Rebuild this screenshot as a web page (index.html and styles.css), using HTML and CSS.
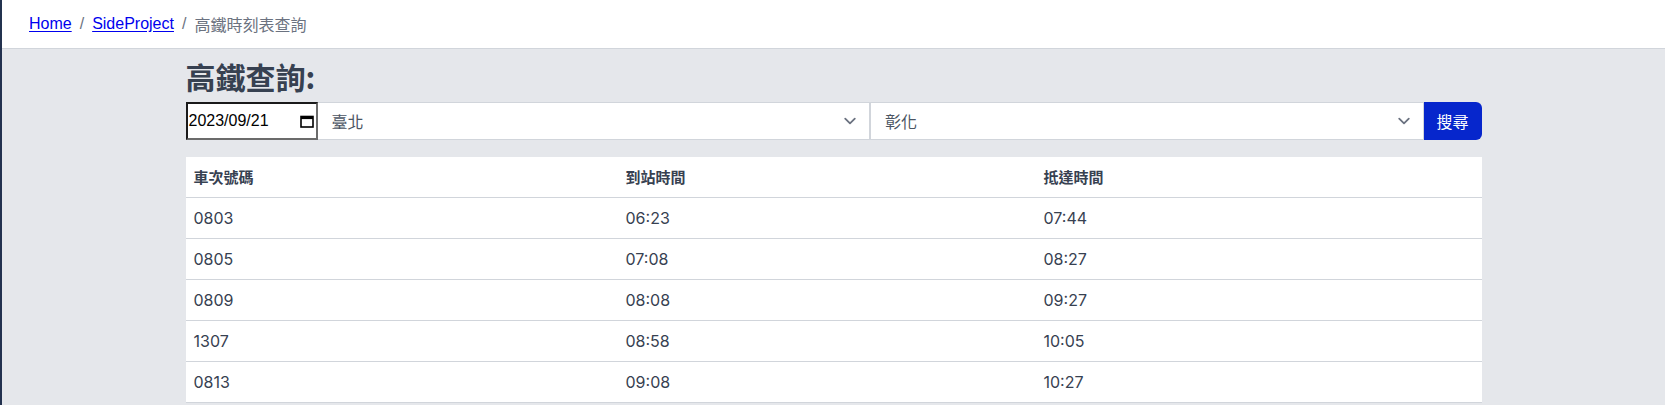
FILE: index.html
```html
<!DOCTYPE html>
<html lang="zh-Hant">
<head>
<meta charset="utf-8">
<title>高鐵時刻表查詢</title>
<link rel="stylesheet" href="styles.css">
</head>
<body>
<header class="topbar">
  <nav class="crumbs">
    <a href="#" class="crumb-link">Home</a>
    <span class="sep">/</span>
    <a href="#" class="crumb-link">SideProject</a>
    <span class="sep">/</span>
    <span class="crumb-current">高鐵時刻表查詢</span>
  </nav>
</header>
<main class="container">
  <h1 class="title">高鐵查詢:</h1>
  <form class="search">
    <div class="date-field">
      <span class="date-text">2023/09/21</span>
      <svg class="cal" width="14" height="13" viewBox="0 0 14 13" aria-hidden="true">
        <rect x="1" y="1.5" width="12" height="10.5" fill="none" stroke="#000" stroke-width="1.6"/>
        <rect x="1" y="1.5" width="12" height="2.6" fill="#000"/>
      </svg>
    </div>
    <div class="select">
      <span class="select-text">臺北</span>
      <svg class="chev" width="24" height="24" viewBox="0 0 20 20" aria-hidden="true"><path d="M6 8l4 4 4-4" fill="none" stroke="#6b7280" stroke-width="1.5" stroke-linecap="round" stroke-linejoin="round"/></svg>
    </div>
    <div class="select">
      <span class="select-text">彰化</span>
      <svg class="chev" width="24" height="24" viewBox="0 0 20 20" aria-hidden="true"><path d="M6 8l4 4 4-4" fill="none" stroke="#6b7280" stroke-width="1.5" stroke-linecap="round" stroke-linejoin="round"/></svg>
    </div>
    <button type="button" class="btn">搜尋</button>
  </form>
  <table class="timetable">
    <colgroup>
      <col class="c1"><col class="c2"><col class="c3">
    </colgroup>
    <thead>
      <tr><th>車次號碼</th><th>到站時間</th><th>抵達時間</th></tr>
    </thead>
    <tbody>
      <tr><td>0803</td><td>06:23</td><td>07:44</td></tr>
      <tr><td>0805</td><td>07:08</td><td>08:27</td></tr>
      <tr><td>0809</td><td>08:08</td><td>09:27</td></tr>
      <tr><td>1307</td><td>08:58</td><td>10:05</td></tr>
      <tr><td>0813</td><td>09:08</td><td>10:27</td></tr>
    </tbody>
  </table>
</main>
</body>
</html>
```

FILE: styles.css
```css
* { box-sizing: border-box; }

html, body { margin: 0; padding: 0; }

body {
  background: #e5e7eb;
  border-left: 2px solid #23324f;
  min-height: 100vh;
  font-family: Inter, "Noto Sans CJK TC", sans-serif;
  color: #374151;
}

.topbar {
  background: #ffffff;
  border-bottom: 1px solid #d1d5db;
  padding: 12px 27px;
  height: 49px;
}

.crumbs {
  font-family: "Liberation Sans", "Noto Sans CJK TC", sans-serif;
  font-size: 16px;
  line-height: 24px;
  display: flex;
  align-items: center;
}

.crumb-link {
  color: #0000ee;
  text-decoration: underline;
  text-underline-offset: 2px;
}

.sep {
  color: #6b7280;
  margin: 0 8px;
}

.crumb-current {
  color: #6b7280;
  font-family: "Noto Sans CJK TC", sans-serif;
}

.container {
  width: 1296px;
  margin: 0 auto;
  padding-top: 9px;
}

.title {
  margin: 0 0 8px 0;
  font-size: 30px;
  line-height: 36px;
  font-weight: 700;
  color: #374151;
  font-family: "Noto Sans CJK TC", sans-serif;
}

.search {
  display: flex;
  height: 38px;
  margin: 0;
}

.date-field {
  width: 132px;
  height: 38px;
  background: #ffffff;
  border-style: solid;
  border-width: 2px;
  border-color: #1a1a1a #6b6b6b #6b6b6b #1a1a1a;
  display: flex;
  align-items: center;
  justify-content: space-between;
  padding: 0 2px 0 1px;
}

.date-text {
  font-family: "Liberation Sans", sans-serif;
  font-size: 16px;
  color: #000000;
}

.select {
  flex: 1;
  height: 38px;
  background: #ffffff;
  border: 1px solid #d1d5db;
  border-left: none;
  display: flex;
  align-items: center;
  justify-content: space-between;
  padding: 0 7px 0 14px;
}

.select + .select {
  border-left: 1px solid #d1d5db;
}

.select-text {
  font-family: "Noto Sans CJK TC", sans-serif;
  font-size: 16px;
  color: #4b5563;
}

.btn {
  width: 58px;
  height: 38px;
  background: #0626cc;
  color: #ffffff;
  border: none;
  border-radius: 0 6px 6px 0;
  font-family: "Noto Sans CJK TC", sans-serif;
  font-size: 16px;
  padding: 0;
}

.timetable {
  width: 100%;
  margin-top: 17px;
  background: #ffffff;
  border-collapse: collapse;
  table-layout: fixed;
}

.c1 { width: 432px; }
.c2 { width: 418px; }
.c3 { width: 446px; }

.timetable th,
.timetable td {
  text-align: left;
  padding: 8px;
  font-size: 16px;
  line-height: 24px;
  border-bottom: 1px solid #d1d5db;
  color: #374151;
}

.timetable th {
  font-family: "Noto Sans CJK TC", sans-serif;
  font-weight: 700;
  font-size: 15px;
}

.timetable td {
  font-family: Inter, sans-serif;
  font-weight: 400;
}
```
